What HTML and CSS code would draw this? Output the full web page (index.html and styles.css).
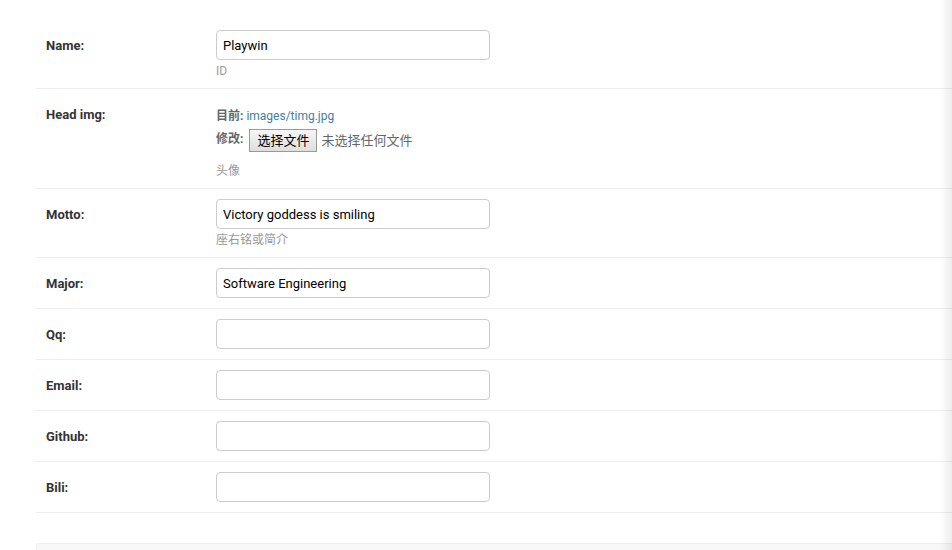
FILE: index.html
```html
<!DOCTYPE html>
<html lang="zh-CN">
<head>
<meta charset="utf-8">
<title>Playwin</title>
<link rel="stylesheet" href="styles.css">
</head>
<body>
<form class="page">
  <div class="row">
    <label class="name" for="name">Name:</label>
    <div class="field">
      <input class="text" id="name" type="text" value="Playwin">
      <p class="help">ID</p>
    </div>
  </div>
  <div class="row">
    <label class="name" for="head-img">Head img:</label>
    <div class="field">
      <div class="upload">
        <p class="line"><b class="caption">目前:</b> <a class="link" href="#">images/timg.jpg</a></p>
        <div class="change">
          <b class="caption">修改:</b>
          <input id="head-img" type="file" hidden>
          <button class="choose" id="choose" type="button">选择文件</button>
          <output class="chosen" id="chosen" for="head-img">未选择任何文件</output>
        </div>
      </div>
      <p class="help">头像</p>
    </div>
  </div>
  <div class="row">
    <label class="name" for="motto">Motto:</label>
    <div class="field">
      <input class="text" id="motto" type="text" value="Victory goddess is smiling">
      <p class="help">座右铭或简介</p>
    </div>
  </div>
  <div class="row">
    <label class="name" for="major">Major:</label>
    <div class="field"><input class="text" id="major" type="text" value="Software Engineering"></div>
  </div>
  <div class="row">
    <label class="name" for="qq">Qq:</label>
    <div class="field"><input class="text" id="qq" type="text"></div>
  </div>
  <div class="row">
    <label class="name" for="email">Email:</label>
    <div class="field"><input class="text" id="email" type="text"></div>
  </div>
  <div class="row">
    <label class="name" for="github">Github:</label>
    <div class="field"><input class="text" id="github" type="text"></div>
  </div>
  <div class="row">
    <label class="name" for="bili">Bili:</label>
    <div class="field"><input class="text" id="bili" type="text"></div>
  </div>
  <div class="submit-row"></div>
</form>
<script src="script.js"></script>
</body>
</html>
```
FILE: styles.css
```css
* {
  box-sizing: border-box;
}

body {
  margin: 0;
  background: #fff;
  color: #666;
  font: 13px/18px Roboto, "Noto Sans CJK SC", sans-serif;
}

/* Soft shade along the right edge of the window */
body::after {
  content: "";
  position: fixed;
  top: 0;
  right: 0;
  bottom: 0;
  width: 12px;
  background: linear-gradient(to right, rgba(0, 0, 0, 0), rgba(0, 0, 0, 0.07));
  pointer-events: none;
}

.page {
  display: flex;
  flex-direction: column;
  height: 100vh;
  padding: 20px 0 0 36px;
  overflow: hidden;
}

.row {
  display: flex;
  flex-shrink: 0;
  padding: 10px;
  border-bottom: 1px solid #eee;
}

.name {
  flex: 0 0 170px;
  padding-top: 7px;
  color: #333;
  font-weight: 700;
}

.field {
  flex: 1;
}

.text {
  display: block;
  width: 274px;
  height: 30px;
  padding: 5px 6px;
  border: 1px solid #ccc;
  border-radius: 4px;
  background: #fff;
  color: #000;
  font: inherit;
}

.help {
  margin: 0;
  padding-top: 4px;
  color: #999;
  font-size: 12px;
  line-height: 14px;
}

.upload {
  padding: 8px 0;
}

.line {
  margin: 0;
  font-size: 12px;
}

.caption {
  font-size: 12px;
  font-weight: 700;
}

.link {
  color: #447e9b;
  text-decoration: none;
}

.change {
  display: flex;
  align-items: flex-start;
  padding-top: 4px;
}

.change .caption {
  line-height: 20px;
}

.choose {
  height: 23px;
  margin: 0 4px 0 6px;
  padding: 0 7px;
  border: 1px solid #999;
  border-radius: 0;
  background: linear-gradient(#f6f6f6, #dedede);
  color: #000;
  font: inherit;
}

.chosen {
  line-height: 23px;
}

.submit-row {
  flex: 1;
  margin-top: 30px;
  border: 1px solid #eee;
  border-width: 1px 0 0 1px;
  border-radius: 4px 0 0;
  background: #f8f8f8;
}
```
FILE: script.js
```js
const picker = document.getElementById("head-img");

document.getElementById("choose").addEventListener("click", () => picker.click());

picker.addEventListener("change", () => {
  document.getElementById("chosen").textContent =
    picker.files.length ? picker.files[0].name : "未选择任何文件";
});
```
